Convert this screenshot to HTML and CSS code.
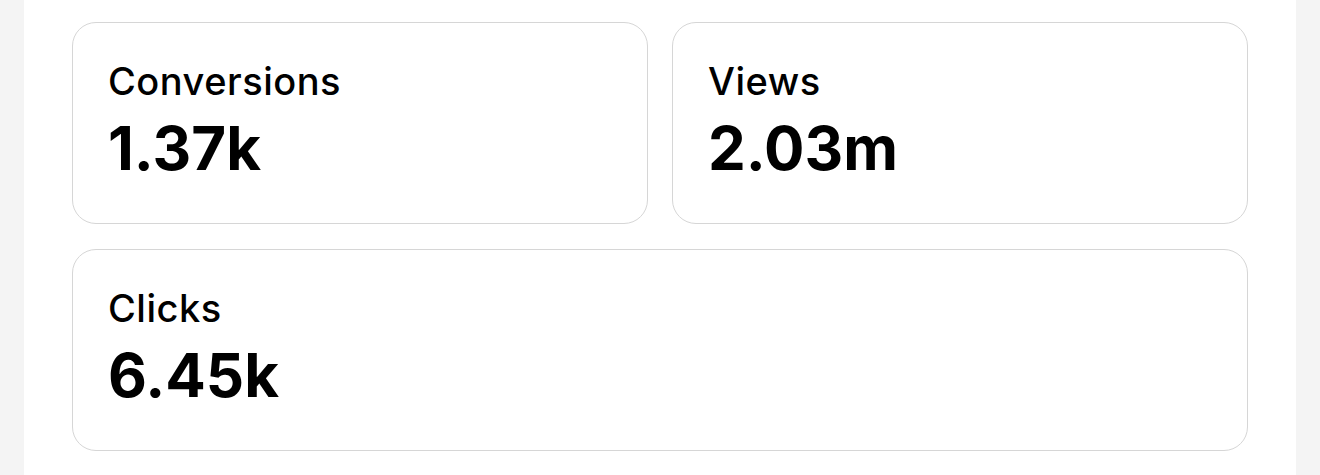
FILE: index.html
```html
<!DOCTYPE html>
<html lang="en">
<head>
<meta charset="utf-8">
<link rel="stylesheet" href="styles.css">
</head>
<body>
<main class="panel">
  <section class="grid">
    <div class="card">
      <div class="label">Conversions</div>
      <div class="value">1.37k</div>
    </div>
    <div class="card">
      <div class="label">Views</div>
      <div class="value">2.03m</div>
    </div>
    <div class="card wide">
      <div class="label">Clicks</div>
      <div class="value">6.45k</div>
    </div>
  </section>
</main>
</body>
</html>
```
FILE: styles.css
```css
html, body {
  margin: 0;
  padding: 0;
  background: #f4f4f4;
  font-family: Inter, "Noto Sans", sans-serif;
  color: #000;
}
.panel {
  margin: 0 24px;
  background: #fff;
  min-height: 475px;
  padding: 22px 48px 0;
  box-sizing: border-box;
}
.grid {
  display: grid;
  grid-template-columns: 1fr 1fr;
  gap: 25px 24px;
}
.card {
  border: 1px solid #d6d6d6;
  border-radius: 24px;
  height: 202px;
  box-sizing: border-box;
  padding: 35px 35px;
}
.wide {
  grid-column: 1 / span 2;
}
.label {
  font-size: 38px;
  font-weight: 500;
  line-height: 46px;
  letter-spacing: 0.5px;
}
.value {
  font-size: 60px;
  font-weight: 700;
  line-height: 88px;
}
```
